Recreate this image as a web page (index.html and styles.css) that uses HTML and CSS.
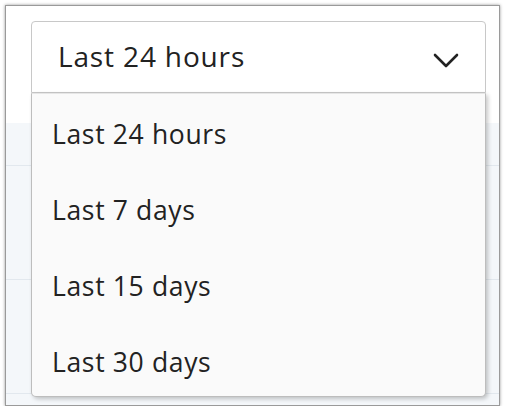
FILE: index.html
```html
<!DOCTYPE html>
<html>
<head>
<meta charset="utf-8">
<link rel="stylesheet" href="styles.css">
</head>
<body>
<div class="frame">
  <div class="top">
    <div class="select">
      <span class="value">Last 24 hours</span>
      <svg class="chev" width="26" height="16" viewBox="0 0 26 16"><path d="M2 2 L13 13 L24 2" fill="none" stroke="#222" stroke-width="2.6" stroke-linecap="round" stroke-linejoin="round"/></svg>
    </div>
  </div>
  <div class="content">
    <div class="row"></div>
    <div class="row"></div>
    <div class="row"></div>
  </div>
  <ul class="menu">
    <li>Last 24 hours</li>
    <li>Last 7 days</li>
    <li>Last 15 days</li>
    <li>Last 30 days</li>
  </ul>
</div>
</body>
</html>
```
FILE: styles.css
```css
html, body { margin: 0; padding: 0; background: #ffffff; }
body { font-family: "Open Sans", "Noto Sans", sans-serif; color: #222; }
.frame {
  position: relative;
  margin: 5px 0 0 5px;
  width: 493px;
  height: 399px;
  border: 1px solid #9a9a9a;
  box-shadow: 0 0 3px rgba(0,0,0,0.4);
  background: #f4f7fa;
  overflow: hidden;
  display: flex;
  flex-direction: column;
}
.top {
  background: #fff;
  height: 117px;
  padding: 15px 0 0 25px;
  box-sizing: border-box;
}
.select {
  width: 455px;
  height: 72px;
  box-sizing: border-box;
  border: 1px solid #c8c8c8;
  border-radius: 4px 4px 0 0;
  background: #fff;
  display: flex;
  align-items: center;
  justify-content: space-between;
  padding: 0 26px 0 26px;
}
.value { font-size: 28px; line-height: 1; padding-bottom: 2px; letter-spacing: 0.85px; }
.chev { display: block; margin-top: 8px; }
.content { flex: 1; display: flex; flex-direction: column; }
.row { height: 42px; border-bottom: 1px solid #e2e8ee; }
.row + .row { height: 113px; }
.menu {
  position: absolute;
  left: 25px;
  top: 87px;
  width: 455px;
  height: 304px;
  box-sizing: border-box;
  margin: 0;
  padding: 2px 0 0 0;
  list-style: none;
  background: #fafafa;
  border: 1px solid #bdbdbd;
  border-top-color: #e6e6e6;
  border-radius: 0 0 5px 5px;
  box-shadow: 2px 2px 4px rgba(0,0,0,0.22);
}
.menu li {
  height: 76px;
  display: flex;
  align-items: center;
  padding-left: 20px;
  font-size: 26.5px;
  letter-spacing: 0.65px;
  color: #222;
}
```
